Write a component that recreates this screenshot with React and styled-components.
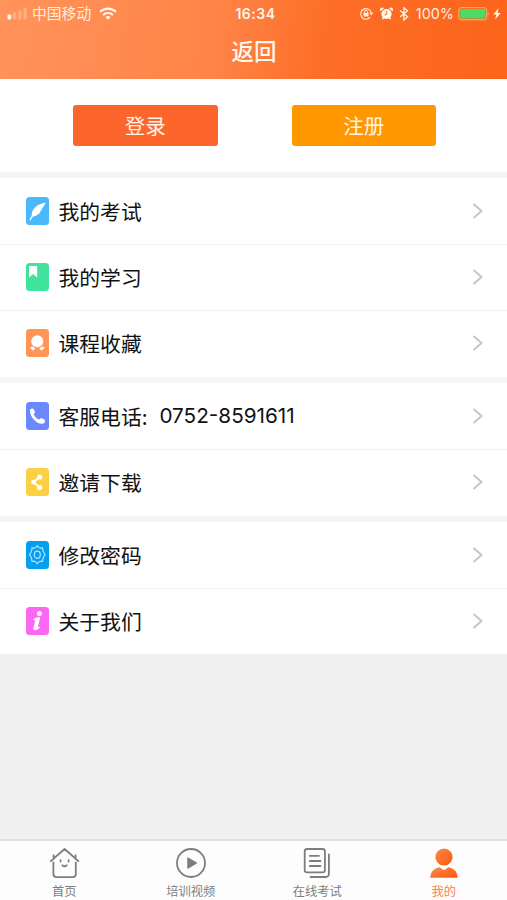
import styled, { createGlobalStyle } from "styled-components";

const App = () => {
  return (
    <>
      <GlobalStyle />
      <StyledPage>
        <Header />
        <StyledActions>
          <StyledButton $color="#fc652b">登录</StyledButton>
          <StyledButton $color="#ff9800">注册</StyledButton>
        </StyledActions>

        <StyledGroup $bottom={1}>
          <MenuRow icon={<QuillIcon />} color="#49b9fb" label="我的考试" />
          <MenuRow icon={<BookmarkIcon />} color="#41e29b" label="我的学习" />
          <MenuRow icon={<MedalIcon />} color="#ff9556" label="课程收藏" />
        </StyledGroup>
        <StyledGroup $bottom={1}>
          <MenuRow
            icon={<PhoneIcon />}
            color="#6a89fd"
            label="客服电话:"
            value="0752-8591611"
          />
          <MenuRow icon={<ShareIcon />} color="#fbd044" label="邀请下载" />
        </StyledGroup>
        <StyledGroup $bottom={0}>
          <MenuRow icon={<GearIcon />} color="#059ff0" label="修改密码" />
          <MenuRow icon={<InfoIcon />} color="#fb66f3" label="关于我们" />
        </StyledGroup>

        <StyledTabBar>
          <Tab icon={<HomeIcon />} label="首页" />
          <Tab icon={<PlayIcon />} label="培训视频" />
          <Tab icon={<PapersIcon />} label="在线考试" />
          <Tab icon={<PersonIcon />} label="我的" active />
        </StyledTabBar>
      </StyledPage>
    </>
  );
};

export default App;

const Header = () => (
  <StyledHeader>
    <StyledStatus>
      <StatusSide>
        <SignalIcon />
        <Carrier>中国移动</Carrier>
        <WifiIcon />
      </StatusSide>
      <Clock>16:34</Clock>
      <StatusSide $end>
        <StatusIcons>
          <LockIcon />
          <AlarmIcon />
          <BluetoothIcon />
        </StatusIcons>
        <Percent>100%</Percent>
        <BatteryIcon />
        <BoltIcon />
      </StatusSide>
    </StyledStatus>
    <Title>返回</Title>
  </StyledHeader>
);

const MenuRow = ({ icon, color, label, value }) => (
  <StyledRow>
    <IconTile $color={color}>{icon}</IconTile>
    <RowLabel>{label}</RowLabel>
    {value && <RowValue>{value}</RowValue>}
    <Chevron width="12" height="18" viewBox="0 0 12 18">
      <path d="M1.5 2L9.5 9L1.5 16" />
    </Chevron>
  </StyledRow>
);

const Tab = ({ icon, label, active }) => (
  <StyledTab $active={active}>
    {icon}
    <TabLabel>{label}</TabLabel>
  </StyledTab>
);

// status bar icons
const SignalIcon = () => (
  <svg width="21" height="14" viewBox="0 0 21 14" fill="#fff4e8">
    <rect x="0.5" y="7.5" width="3.8" height="5" rx="1" />
    <rect x="6" y="5.5" width="3.3" height="7" rx="1" opacity="0.3" />
    <rect x="11.2" y="3.5" width="3.3" height="9" rx="1" opacity="0.3" />
    <rect x="16.4" y="1.2" width="3.3" height="11.3" rx="1" opacity="0.3" />
  </svg>
);

const WifiIcon = () => (
  <svg width="18" height="14" viewBox="0 0 18 14" fill="none" stroke="#fffaf2">
    <path d="M1.1 4.8C5.6 0.5 12.4 0.5 16.9 4.8" strokeWidth="2.2" />
    <path d="M4.1 8C7 5.3 11 5.3 13.9 8" strokeWidth="2.1" />
    <path d="M6.4 10.1Q9 7.9 11.6 10.1L9 12.8Z" fill="#fffaf2" stroke="none" />
  </svg>
);

const LockIcon = () => (
  <svg width="15" height="14" viewBox="0 0 15 14" fill="none" stroke="#ffe9d5">
    <path d="M11.2 10.2A5.3 5.3 0 1 1 12.2 5.9" strokeWidth="1.2" />
    <path d="M10.2 5.6H14.2L12.2 8.4Z" fill="#ffe9d5" stroke="none" />
    <rect x="4.5" y="5.8" width="5" height="3.8" rx="0.5" fill="#ffe9d5" stroke="none" />
    <path d="M5.5 5.9V4.8A1.5 1.5 0 0 1 8.5 4.8V5.9" strokeWidth="1" />
  </svg>
);

const AlarmIcon = () => (
  <svg width="13" height="14" viewBox="0 0 13 14">
    <g fill="#fffaf2">
      <circle cx="6.5" cy="7" r="5.1" />
      <path d="M0.6 4.2A2.2 2.2 0 0 1 4 1.3ZM12.4 4.2A2.2 2.2 0 0 0 9 1.3Z" />
      <path d="M2.5 10.3L1.8 12.4L4.5 11.8ZM10.5 10.3L11.2 12.4L8.5 11.8Z" />
    </g>
    <path d="M6.7 4V7.2L4.4 8" fill="none" stroke="#fc7a38" strokeWidth="1.1" />
  </svg>
);

const BluetoothIcon = () => (
  <svg width="10" height="14" viewBox="0 0 10 14" fill="none" stroke="#fff4e8" strokeWidth="1.3">
    <path d="M1 3.6L8.6 9.8L4.9 13V0.8L8.6 3.8L1 10" />
  </svg>
);

const BatteryIcon = () => (
  <svg width="32" height="14" viewBox="0 0 32 14">
    <rect x="0.8" y="0.6" width="27.8" height="12.2" rx="2.4" fill="none" stroke="#ffb27a" strokeWidth="1" />
    <rect x="2.2" y="2" width="25" height="9.4" rx="0.8" fill="#4cd964" />
    <path d="M29.8 4.7Q31.6 6.7 29.8 8.7Z" fill="#ffb27a" />
  </svg>
);

const BoltIcon = () => (
  <svg width="8" height="12" viewBox="0 0 8 12" fill="#fff4e8">
    <path d="M5.5 0.2L0.2 6.6H3.3L2.1 11.5L7.7 4.9H4.6Z" />
  </svg>
);

// menu icons, all drawn on the 23x28 tile
const QuillIcon = () => (
  <svg width="23" height="28" viewBox="0 0 23 28" fill="#fff">
    <path d="M19.6 5.6C13.5 6.6 8.2 9.6 6.3 14.6C5.6 16.6 5.9 17.9 5.6 18.9L3.2 23.3L4.2 23.7L7 19.4C10.3 19.2 13.4 17.2 14.8 14.3L14.2 14L16.4 12.2L15.8 11.8C17.7 10 18.6 8 19.6 5.6Z" />
  </svg>
);

const BookmarkIcon = () => (
  <svg width="23" height="28" viewBox="0 0 23 28" fill="#fff">
    <path d="M3 3H11.2V14.6L7.1 10.9L3 14.6Z" />
  </svg>
);

const MedalIcon = () => (
  <svg width="23" height="28" viewBox="0 0 23 28">
    <circle cx="11.3" cy="12.3" r="6" fill="#fff" />
    <path d="M4.3 18.6L6.7 17.9L9 19.6L6.8 21.2ZM18.3 18.6L15.9 17.9L13.6 19.6L15.8 21.2Z" fill="#fff" stroke="#fff" strokeWidth="0.8" />
  </svg>
);

const PhoneIcon = () => (
  <svg width="23" height="28" viewBox="0 0 23 28" fill="#fff">
    <path d="M4 8.4C4 7 5.6 6 6.8 6.6C8.3 7.5 9.5 10 8.6 11.2L7.7 12.3C8.6 14.7 10.7 16.7 13.1 17.5L14.5 16.5C15.8 15.8 18.6 17.2 19.1 18.8C19.4 20.1 17.9 21.8 16 21.8C10.2 21.8 3.9 14.7 4 8.4Z" />
  </svg>
);

const ShareIcon = () => (
  <svg width="23" height="28" viewBox="0 0 23 28" fill="#fff">
    <path d="M13.8 9L7.3 14.1L13.8 19.5" fill="none" stroke="#fff" strokeWidth="2" />
    <circle cx="13.7" cy="9" r="2.6" />
    <circle cx="7.5" cy="14.1" r="2.3" />
    <circle cx="13.7" cy="19.5" r="2.6" />
  </svg>
);

const GearIcon = () => (
  <svg width="23" height="28" viewBox="0 0 23 28" fill="none" stroke="#b4e3fb" strokeWidth="1.2">
    <path d="M9.9 6.5L11.3 4.6L12.8 6.5L14.4 7.1L16.6 6.8L16.9 9.4L17.6 11.2L19.1 13.7L17.6 16L16.9 17.8L16.5 20.5L14.4 20.2L12.8 21L11.3 22.9L9.9 21L8.2 20.2L6 20.5L5.7 17.8L5 16L3.5 13.7L5 11.2L5.7 9.4L6 6.8L8.2 7.1Z" strokeLinejoin="round" />
    <ellipse cx="11.3" cy="13.7" rx="3" ry="3.6" />
  </svg>
);

const InfoIcon = () => (
  <svg width="23" height="28" viewBox="0 0 23 28" fill="#fff">
    <circle cx="13.4" cy="6.6" r="2.5" />
    <path d="M7.3 12.2C9.2 10.9 11.4 10.2 14.2 10.4L11.9 20C11.8 20.8 12.5 20.3 13.5 19.6L13.9 20.6C12 22.6 9.6 23.7 8.2 23C6.7 22.2 7.7 19.8 8.3 17.2L9.2 13.3L7.4 13.3Z" />
  </svg>
);

// tab bar icons
const HomeIcon = () => (
  <svg width="32" height="32" viewBox="-0.6 0 32 32" fill="none" stroke="#7d7d7d" strokeWidth="1.8" strokeLinecap="round" strokeLinejoin="round">
    <path d="M2.2 14.2L16 2L29.8 14.2M5 12V8.2M27 12V8.2" />
    <path d="M4.8 15.5V27A3.2 3.2 0 0 0 8 30.2H24A3.2 3.2 0 0 0 27.2 27V15.5" />
    <path d="M12 13.2V14.6M20 13.2V14.6M13.8 18.3Q16 20.3 18.2 18.3" />
  </svg>
);

const PlayIcon = () => (
  <svg width="32" height="32" viewBox="0 0 32 32">
    <circle cx="16" cy="16" r="14" fill="none" stroke="#7d7d7d" strokeWidth="1.8" />
    <path d="M12.8 10.8L21.8 16L12.8 21.4Z" fill="#7d7d7d" stroke="#7d7d7d" strokeLinejoin="round" />
  </svg>
);

const PapersIcon = () => (
  <svg width="32" height="32" viewBox="0 0 32 32" fill="none" stroke="#7d7d7d" strokeWidth="1.8" strokeLinecap="round">
    <rect x="3.7" y="2" width="20.2" height="23.3" rx="2.4" />
    <path d="M8.8 8.8H18M8.8 14H19.5M8.8 19H19.5" />
    <path d="M27.9 7.5V27A3 3 0 0 1 24.9 30H9.6" />
  </svg>
);

const PersonIcon = () => (
  <svg width="32" height="32" viewBox="0 0 32 32">
    <defs>
      <linearGradient id="person" x1="0" y1="0" x2="1" y2="1">
        <stop offset="0" stopColor="#ff8a50" />
        <stop offset="1" stopColor="#fb5908" />
      </linearGradient>
    </defs>
    <g fill="url(#person)">
      <circle cx="16" cy="10" r="8.6" />
      <path d="M2.3 30.8C2.6 24.8 6 21.2 11.5 20.3L16 23.2L20.5 20.3C26 21.2 29.4 24.8 29.7 30.8Z" />
    </g>
  </svg>
);

const GlobalStyle = createGlobalStyle`
  * {
    box-sizing: border-box;
  }

  body {
    margin: 0;
    font-family: "Noto Sans CJK SC", sans-serif;
  }

  svg {
    display: block;
    flex-shrink: 0;
  }
`;

const StyledPage = styled.div`
  display: flex;
  flex-direction: column;
  width: 507px;
  height: 900px;
  background: #f0f0f0;
  overflow: hidden;
`;

const StyledHeader = styled.header`
  display: flex;
  flex-direction: column;
  height: 79px;
  color: #fff6ec;
  background: linear-gradient(97deg, #ff935b 0%, #ff8448 42%, #fd6e26 64%, #fc641a 100%);
`;

const StyledStatus = styled.div`
  display: grid;
  grid-template-columns: 1fr auto 1fr;
  align-items: center;
  height: 27px;
  padding: 0 6px 0 7px;
`;

const StatusSide = styled.div`
  display: flex;
  align-items: center;
  justify-content: ${(props) => (props.$end ? "flex-end" : "flex-start")};
`;

const StatusIcons = styled.div`
  display: flex;
  gap: 6px;
  margin-right: 7px;
`;

const Carrier = styled.span`
  margin: 0 8px 0 4px;
  padding-bottom: 2px;
  color: #ffeedf;
  font-size: 14.8px;
  line-height: 20px;
`;

const Clock = styled.span`
  padding-left: 3px;
  font: 600 14px/20px Inter, sans-serif;
  letter-spacing: 0.5px;
`;

const Percent = styled.span`
  margin-right: 4px;
  color: #ffeedf;
  font: 400 14.4px/20px Inter, sans-serif;

  & + svg {
    margin-right: 3px;
  }
`;

const Title = styled.h1`
  margin: 0;
  padding: 7px 0 0 1px;
  font-size: 22.5px;
  line-height: 32px;
  font-weight: 500;
  text-align: center;
`;

const StyledActions = styled.div`
  display: flex;
  gap: 74px;
  height: 93px;
  padding: 26px 71px 0 73px;
  background: #fff;
`;

const StyledButton = styled.button`
  flex: 1;
  height: 41px;
  padding: 0;
  border: 0;
  border-radius: 3px;
  color: #fff3e6;
  background: ${(props) => props.$color};
  font-family: inherit;
  font-size: 20.5px;
  line-height: 41px;
`;

const StyledGroup = styled.section`
  padding-bottom: ${(props) => props.$bottom}px;
  border-top: 6px solid #f5f5f5;
  background: #fff;
`;

const StyledRow = styled.div`
  display: flex;
  align-items: center;
  height: 66px;
  padding: 0 23px 1px 26px;

  & + & {
    box-shadow: inset 0 1px #f2f2f2;
  }
`;

const IconTile = styled.span`
  width: 23px;
  height: 28px;
  border-radius: 3.5px;
  background: ${(props) => props.$color};
`;

const RowLabel = styled.span`
  margin-left: 9.5px;
  color: #111;
  font-size: 20.8px;
  line-height: 30px;
`;

const RowValue = styled.span`
  margin-left: 12px;
  color: #111;
  font: 400 20.7px/30px Inter, sans-serif;
`;

const Chevron = styled.svg`
  margin-left: auto;
  fill: none;
  stroke: #c6c6c6;
  stroke-width: 2;
`;

const StyledTabBar = styled.nav`
  display: grid;
  grid-template-columns: repeat(4, 1fr);
  height: 61px;
  margin-top: auto;
  padding-left: 1px;
  border-top: 2px solid #dfdfdf;
  background: #fdfdfd;
`;

const StyledTab = styled.div`
  display: flex;
  flex-direction: column;
  align-items: center;
  padding-top: 6px;
  color: ${(props) => (props.$active ? "#ff8050" : "#7d7d7d")};
`;

const TabLabel = styled.span`
  margin-top: 3px;
  font-size: 12.3px;
  line-height: 18px;
`;
